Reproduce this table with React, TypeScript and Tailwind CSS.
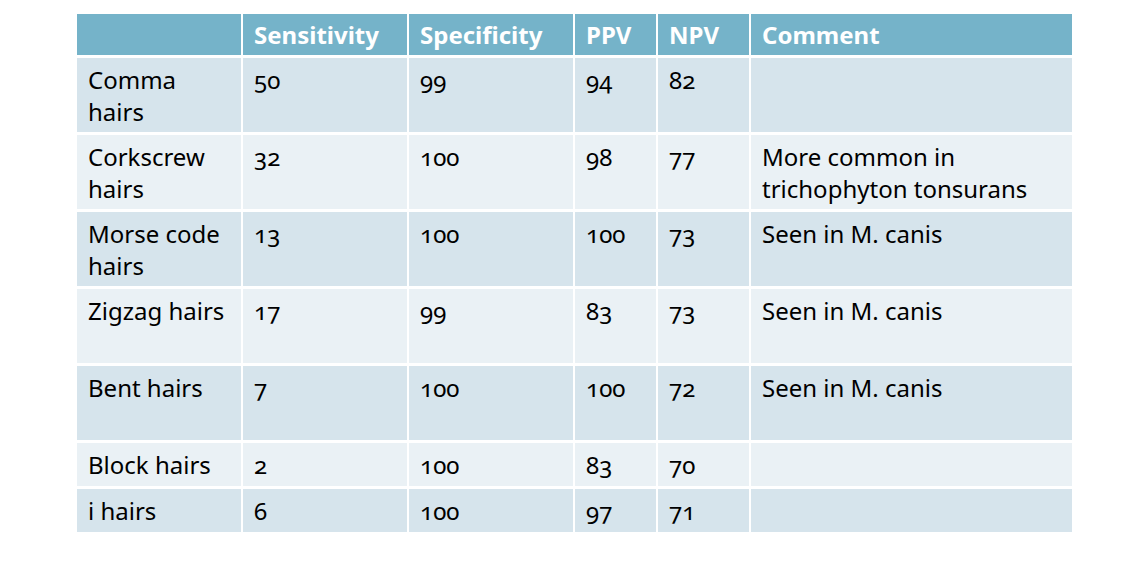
const header = ["", "Sensitivity", "Specificity", "PPV", "NPV", "Comment"];

const rows: string[][] = [
  ["Comma hairs", "50", "99", "94", "82", ""],
  ["Corkscrew hairs", "32", "100", "98", "77", "More common in trichophyton tonsurans"],
  ["Morse code hairs", "13", "100", "100", "73", "Seen in M. canis"],
  ["Zigzag hairs", "17", "99", "83", "73", "Seen in M. canis"],
  ["Bent hairs", "7", "100", "100", "72", "Seen in M. canis"],
  ["Block hairs", "2", "100", "83", "70", ""],
  ["i hairs", "6", "100", "97", "71", ""],
];

export default function App() {
  return (
    <div
      className="w-[1146px] h-[564px] bg-white pt-[14px] pl-[77px]"
      style={{ fontFamily: "'Noto Sans', sans-serif", fontVariantNumeric: "oldstyle-nums" }}
    >
      <div className="grid grid-cols-[164px_164px_164px_81px_91px_321px] grid-rows-[41px_74px_74px_74px_74px_74px_43px_43px] gap-x-[2px] gap-y-[3px] w-fit">
        {header.map((h, i) => (
          <div key={`h${i}`} className="bg-[#75b3c9] text-white font-bold text-[24px] leading-[32px] pt-[5px] pl-[11px] whitespace-nowrap">
            {h}
          </div>
        ))}
        {rows.map((r, ri) =>
          r.map((c, ci) => (
            <div
              key={`${ri}-${ci}`}
              className={`${ri % 2 === 0 ? "bg-[#d6e4ec]" : "bg-[#eaf1f5]"} text-black text-[24px] leading-[32px] pt-[6px] pl-[11px] pr-[6px]`}
            >
              {c}
            </div>
          ))
        )}
      </div>
    </div>
  );
}
